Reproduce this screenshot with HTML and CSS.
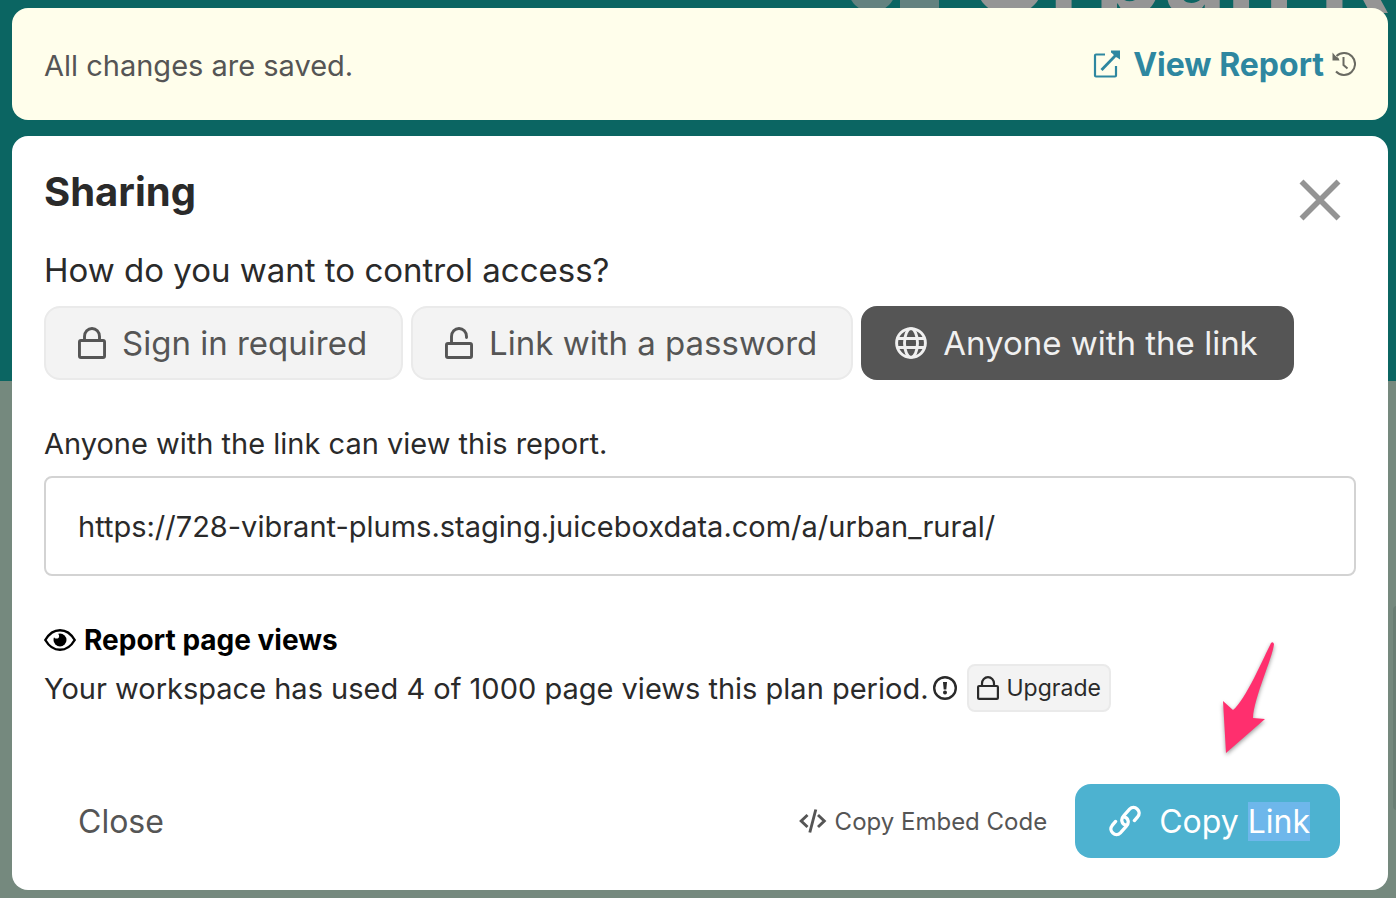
FILE: index.html
```html
<!DOCTYPE html>
<html lang="en">
<head>
<meta charset="utf-8">
<title>Sharing</title>
<link rel="stylesheet" href="styles.css">
</head>
<body>
<div class="backdrop" aria-hidden="true">
  <div class="hero">
    <div class="hero-title">
      <svg class="hero-icon" width="96" height="60" viewBox="0 0 96 60"><circle cx="28" cy="34" r="24"/><rect x="56" y="0" width="39" height="60"/></svg>
      <span>Urban Rural</span>
    </div>
  </div>
  <div class="scroll-thumb"></div>
</div>

<main class="page">
  <header class="status">
    <p class="status-text">All changes are saved.</p>
    <div class="status-actions">
      <a class="view-report" href="#">
        <svg width="28" height="28" viewBox="0 0 28 28" fill="none" stroke="currentColor" stroke-width="2.200" stroke-linejoin="round"><path d="M12 4.500H3Q2 4.500 2 5.500V25.500Q2 26.500 3 26.500H22Q23 26.500 23 25.500V16"/><path d="M8.500 20L23 5" stroke-width="2.800"/><path d="M18 0.500H27V9.500L24 7.500Q22 7 21 5.500Q20.500 4 18 2.500Z" fill="currentColor" stroke="none"/></svg>
        <span>View Report</span>
      </a>
      <button class="icon-button history" type="button" aria-label="History">
        <svg width="24" height="26" viewBox="0 0 24 26" fill="none" stroke="currentColor" stroke-width="2"><path d="M4.500 5A11 11 0 1 1 4 20.500"/><path d="M0.500 1.500V9.500H7.500L6.500 7L3.500 5Z" fill="currentColor" stroke="none"/><path d="M11.500 6V14L15.500 17.500"/></svg>
      </button>
    </div>
  </header>

  <section class="dialog" role="dialog" aria-labelledby="dialog-title">
    <div class="dialog-head">
      <h1 id="dialog-title">Sharing</h1>
      <button class="icon-button dismiss" type="button" aria-label="Dismiss">
        <svg width="42" height="42" viewBox="0 0 42 42" fill="none" stroke="currentColor" stroke-width="5.600"><path d="M2.500 2.500L39.500 39.500M39.500 2.500L2.500 39.500"/></svg>
      </button>
    </div>

    <h2 class="question">How do you want to control access?</h2>
    <div class="options">
      <button class="option" type="button">
        <svg width="28" height="32" viewBox="0 0 28 32" fill="none" stroke="currentColor" stroke-width="2.900"><rect x="1.450" y="13.450" width="25.100" height="17.100" rx="1.500"/><path d="M6.500 13V9.500a7.500 8 0 0 1 15 0V13"/></svg>
        <span>Sign in required</span>
      </button>
      <button class="option" type="button">
        <svg width="28" height="32" viewBox="0 0 28 32" fill="none" stroke="currentColor" stroke-width="2.900"><rect x="1.450" y="16.450" width="25.100" height="14.100" rx="1.500"/><path d="M6.500 16V9.500a7.500 8 0 0 1 15 0V10.500" stroke-linecap="round"/></svg>
        <span>Link with a password</span>
      </button>
      <button class="option selected" type="button" aria-pressed="true">
        <svg width="32" height="32" viewBox="0 0 32 32" fill="none" stroke="currentColor" stroke-width="2.900"><circle cx="16" cy="16" r="14.400"/><ellipse cx="16" cy="16" rx="6.500" ry="14.400"/><path d="M3 11.500H29M3 20.500H29"/></svg>
        <span>Anyone with the link</span>
      </button>
    </div>

    <label class="note" for="report-url">Anyone with the link can view this report.</label>
    <input class="url" id="report-url" type="text" readonly value="https://728-vibrant-plums.staging.juiceboxdata.com/a/urban_rural/">

    <h3 class="views-title">
      <svg width="32" height="24" viewBox="0 0 32 24"><path d="M1.300 12Q7 2.200 16 2.200T30.700 12Q25 21.800 16 21.800T1.300 12Z" fill="none" stroke="currentColor" stroke-width="2.400"/><circle cx="16" cy="12" r="6.500" fill="currentColor"/><circle cx="12.500" cy="8" r="2.600" fill="#fff"/></svg>
      <span>Report page views</span>
    </h3>
    <div class="usage">
      <span>Your workspace has used 4 of 1000 page views this plan period.</span>
      <svg class="info" width="24" height="24" viewBox="0 0 24 24" fill="none" stroke="currentColor"><circle cx="12" cy="12" r="10.800" stroke-width="2.400"/><path d="M10 6H14L13.300 13.500H10.700Z" fill="currentColor" stroke="none"/><circle cx="12" cy="16.500" r="2" fill="currentColor" stroke="none"/></svg>
      <button class="upgrade" type="button">
        <svg width="22" height="24" viewBox="0 0 22 24" fill="none" stroke="currentColor" stroke-width="2.200"><rect x="1.100" y="10" width="19.800" height="12.900" rx="1"/><path d="M5 10V7.500a6 6.300 0 0 1 12 0V10"/></svg>
        <span>Upgrade</span>
      </button>
    </div>

    <footer class="footer">
      <button class="close" type="button">Close</button>
      <button class="embed" type="button">
        <svg width="28" height="24" viewBox="0 0 28 24" fill="none" stroke="currentColor" stroke-width="2.900"><path d="M8.500 6L2.200 12L8.500 18M19 6L25.300 12L19 18M16.800 0.500L10.800 23.500"/></svg>
        <span>Copy Embed Code</span>
      </button>
      <button class="copy" type="button">
        <svg width="32" height="32" viewBox="0 0 32 32" fill="none" stroke="currentColor" stroke-width="3.300" stroke-linecap="round"><path d="M16.800 20.200C12.400 19.200 11.600 13.800 14.600 10.800L20.600 4.200C25.400 -0.800 33.200 6 28.800 11.600L25.400 15.600"/><path d="M15.200 11.800C19.600 12.800 20.400 18.200 17.400 21.200L11.400 27.800C6.600 32.800 -1.200 26 3.200 20.400L6.600 16.400"/></svg>
        <span>Copy <mark>Link</mark></span>
      </button>
      <svg class="pointer" width="60" height="120" viewBox="0 0 60 120" aria-hidden="true"><path d="M52 2Q54 0 55 3C54 16 35 56 34 77L46 78L7 112L4 60L14 69C26 60 46 14 52 2Z"/></svg>
    </footer>
  </section>
</main>
</body>
</html>
```
FILE: styles.css
```css
* { box-sizing: border-box; }

body {
  margin: 0;
  min-height: 100vh;
  background: #75897e;
  color: #2a2a2a;
  font-family: Inter, "Liberation Sans", sans-serif;
  font-size: 29px;
}

h1, h2, h3, p { margin: 0; }
svg { display: block; flex: none; }

button {
  border: 0;
  padding: 0;
  background: none;
  color: #555;
  font: inherit;
  display: inline-flex;
  align-items: center;
  white-space: nowrap;
  cursor: pointer;
}

.backdrop {
  position: absolute;
  inset: 0;
  overflow: hidden;
}

.hero {
  height: 381px;
  background: #0b6562;
}

.hero-title {
  position: absolute;
  top: -90px;
  left: 844px;
  display: flex;
  align-items: flex-end;
  gap: 30px;
  color: #959595;
  font-size: 108px;
  line-height: 128px;
  font-weight: 700;
  white-space: nowrap;
}

.hero-icon { fill: #64827f; margin-bottom: 24px; }

.scroll-thumb {
  position: absolute;
  top: 606px;
  right: -5px;
  width: 8px;
  height: 204px;
  border-radius: 4px;
  background: #6a7e74;
}

.page {
  position: relative;
  display: flex;
  flex-direction: column;
  gap: 16px;
  padding: 8px 8px 8px 12px;
}

.status {
  display: flex;
  align-items: center;
  justify-content: space-between;
  min-height: 112px;
  padding: 0 32px;
  border-radius: 16px;
  background: #fffeeb;
}

.status-text {
  padding-top: 2px;
  color: #555;
}

.status-actions {
  display: flex;
  align-items: center;
  gap: 8px;
}

.view-report {
  display: flex;
  align-items: center;
  gap: 12px;
  color: #2e87a0;
  font-size: 32px;
  font-weight: 700;
  text-decoration: none;
}

.history { color: #6a6a62; }

.dialog {
  padding: 32px;
  border-radius: 16px;
  background: #fff;
}

.dialog-head {
  display: flex;
  align-items: flex-start;
  justify-content: space-between;
  height: 80px;
}

h1 {
  font-size: 40px;
  line-height: 48px;
  font-weight: 700;
}

.dismiss {
  padding: 11px 15px;
  color: #949494;
}

.question {
  font-size: 33px;
  line-height: 44px;
  font-weight: 400;
}

.options {
  display: flex;
  gap: 8px;
  margin-top: 14px;
}

.option {
  gap: 16px;
  height: 74px;
  padding: 0 34px 0 32px;
  border: 2px solid #eaeaea;
  border-radius: 16px;
  background: #f3f3f3;
  font-size: 33px;
}

.option.selected {
  border-color: #555;
  background: #555;
  color: #f0f0f0;
}

.note {
  display: block;
  margin-top: 44px;
  line-height: 40px;
}

.url {
  display: block;
  width: 100%;
  height: 100px;
  margin-top: 12px;
  padding: 0 32px;
  border: 2px solid #d3d3d3;
  border-radius: 8px;
  background: #fff;
  color: #2a2a2a;
  font: inherit;
}

.views-title {
  display: flex;
  align-items: center;
  gap: 8px;
  margin-top: 44px;
  color: #000;
  font-size: 28px;
  line-height: 40px;
  font-weight: 700;
}

.usage {
  display: flex;
  align-items: center;
  margin-top: 4px;
  white-space: nowrap;
}

.info { margin: 0 10px 0 4px; }

.upgrade {
  gap: 8px;
  height: 48px;
  padding: 0 8px;
  border: 2px solid #eaeaea;
  border-radius: 8px;
  background: #f3f3f3;
  color: #2a2a2a;
  font-size: 23px;
}

.footer {
  position: relative;
  display: flex;
  align-items: center;
  margin-top: 72px;
  padding: 0 16px 0 34px;
}

.close {
  margin-right: auto;
  font-size: 32px;
}

.embed {
  gap: 8px;
  margin-right: 28px;
  font-size: 24px;
}

.copy {
  gap: 18px;
  height: 74px;
  padding: 0 30px 0 34px;
  border-radius: 16px;
  background: #4db2d0;
  color: #fff;
  font-size: 32px;
}

mark {
  background: #6eb7eb;
  color: inherit;
}

.pointer {
  position: absolute;
  right: 77px;
  bottom: 97px;
  fill: #ff2f6e;
  filter: drop-shadow(0 2px 2px rgba(0, 0, 0, 0.4));
}
```
